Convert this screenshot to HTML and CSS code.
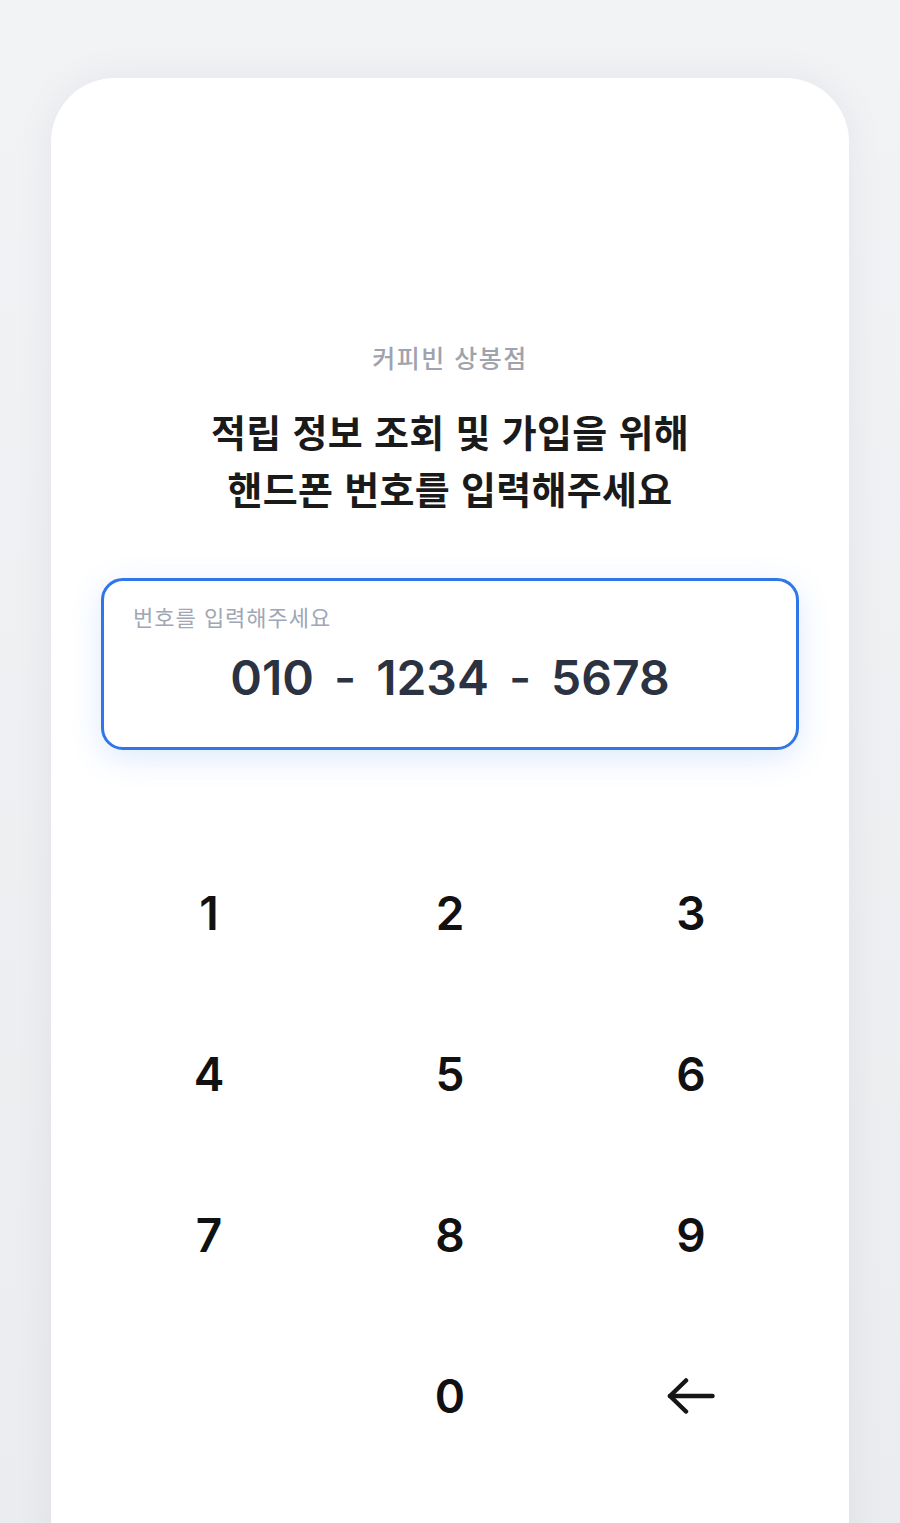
FILE: index.html
```html
<!DOCTYPE html>
<html lang="ko">
<head>
    <meta charset="UTF-8">
    <title>적립 조회</title>
    <link rel="stylesheet" href="styles.css">
</head>
<body>
<div class="page">
    <div class="card">
        <div class="store">커피빈 상봉점</div>
        <div class="title">적립 정보 조회 및 가입을 위해<br>핸드폰 번호를 입력해주세요</div>

        <div class="phone">
            <div class="phone-label">번호를 입력해주세요</div>
            <div class="phone-num">
                <span>010</span><span class="dash">-</span><span>1234</span><span class="dash">-</span><span>5678</span>
            </div>
        </div>

        <div class="keypad">
            <div class="key">1</div>
            <div class="key">2</div>
            <div class="key">3</div>
            <div class="key">4</div>
            <div class="key">5</div>
            <div class="key">6</div>
            <div class="key">7</div>
            <div class="key">8</div>
            <div class="key">9</div>
            <div class="key empty"></div>
            <div class="key">0</div>
            <div class="key back">
                <svg width="48" height="36" viewBox="0 0 48 36" fill="none" stroke="#161616" stroke-width="4.5" stroke-linecap="round" stroke-linejoin="round">
                    <path d="M45.5 18H3"/>
                    <path d="M19 2.5L3 18L19 33.5"/>
                </svg>
            </div>
        </div>
    </div>
</div>
</body>
</html>
```

FILE: styles.css
```css
*{
    padding: 0;
    margin: 0;
    box-sizing: border-box;
}
body{
    background: linear-gradient(#f2f3f5, #ebecef);
    font-family: Inter, "Noto Sans CJK KR", sans-serif;
    overflow: hidden;
}
.page{
    padding: 78px 51px 0;
    height: 1523px;
}
.card{
    background: #fff;
    border-radius: 64px 64px 0 0;
    min-height: 1600px;
    padding-top: 264px;
    box-shadow: 0 0 40px rgba(30, 40, 70, 0.06);
    display: flex;
    flex-direction: column;
    align-items: center;
}
.store{
    font-family: "Noto Sans CJK KR", sans-serif;
    font-size: 25px;
    line-height: 30px;
    font-weight: 500;
    color: #9ea3ad;
    letter-spacing: 1.5px;
}
.title{
    margin-top: 30px;
    font-family: "Noto Sans CJK KR", sans-serif;
    font-size: 38px;
    line-height: 57px;
    font-weight: 700;
    color: #1a1a1a;
    text-align: center;
    letter-spacing: 0.3px;
}
.phone{
    margin-top: 62px;
    width: 698px;
    height: 172px;
    border: 3px solid #2f76ea;
    border-radius: 22px;
    padding: 21px 29px 0;
    box-shadow: 0 8px 32px rgba(47, 118, 234, 0.16);
}
.phone-label{
    font-family: "Noto Sans CJK KR", sans-serif;
    font-size: 22px;
    line-height: 28px;
    color: #a0a7b4;
    letter-spacing: 1px;
}
.phone-num{
    margin-top: 18px;
    display: flex;
    justify-content: center;
    gap: 20px;
    font-size: 48px;
    line-height: 60px;
    font-weight: 600;
    color: #2b3242;
}
.phone-num .dash{
    font-weight: 500;
}
.keypad{
    margin-top: 82px;
    display: grid;
    grid-template-columns: repeat(3, 241px);
    grid-auto-rows: 161px;
}
.key{
    display: flex;
    align-items: center;
    justify-content: center;
    font-size: 46px;
    font-weight: 600;
    color: #111;
    cursor: pointer;
}
```
